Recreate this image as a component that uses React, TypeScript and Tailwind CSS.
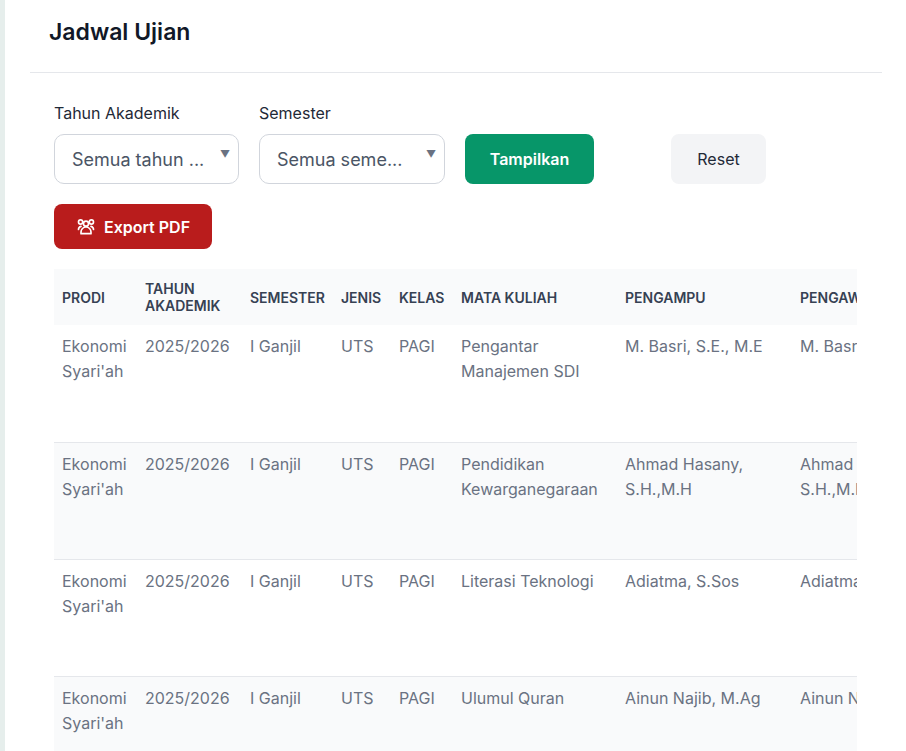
import React from "react";

const rows = [
  ["Pengantar Manajemen SDI", "M. Basri, S.E., M.E", "M. Basri, S.E., M.E"],
  ["Pendidikan Kewarganegaraan", "Ahmad Hasany, S.H.,M.H", "Ahmad Hasany, S.H.,M.H"],
  ["Literasi Teknologi", "Adiatma, S.Sos", "Adiatma, S.Sos"],
  ["Ulumul Quran", "Ainun Najib, M.Ag", "Ainun Najib, M.Ag"],
];
const widths = [83, 105, 91, 58, 62, 164, 175, 200];

export default function App() {
  return (
    <div className="flex min-h-[751px] bg-white text-[#111827]" style={{ fontFamily: "Inter, 'Noto Sans', sans-serif" }}>
      <div className="w-[5px] bg-[#e6eeec] shrink-0" />
      <div className="flex-1 pl-[25px] pr-[24px]">
        <h1 className="h-[73px] pl-[19px] pt-[15px] text-[23px] font-semibold border-b border-gray-200">Jadwal Ujian</h1>
        <div className="pl-[24px] pr-[24px] pt-[28px]">
          <div className="flex items-end">
            <div className="w-[185px] mr-[20px]">
              <div className="text-[16px] mb-[9px] text-[#1f2937]">Tahun Akademik</div>
              <div className="relative h-[50px] rounded-[10px] border border-gray-300 flex items-center pl-[17px] text-[18px] text-gray-600">Semua tahun ...<span className="absolute right-[8px] top-[12px] text-[10px] text-gray-500">▼</span></div>
            </div>
            <div className="w-[186px] mr-[20px]">
              <div className="text-[16px] mb-[9px] text-[#1f2937]">Semester</div>
              <div className="relative h-[50px] rounded-[10px] border border-gray-300 flex items-center pl-[17px] text-[18px] text-gray-600">Semua seme...<span className="absolute right-[8px] top-[12px] text-[10px] text-gray-500">▼</span></div>
            </div>
            <button className="w-[129px] h-[50px] rounded-[8px] bg-[#079669] text-white font-semibold text-[16px] mr-[77px]">Tampilkan</button>
            <button className="w-[95px] h-[50px] rounded-[8px] bg-gray-100 text-[16px] text-[#1f2937]">Reset</button>
          </div>
          <button className="mt-[20px] h-[45px] w-[158px] rounded-[8px] bg-[#b91c1c] text-white font-semibold text-[16px] flex items-center justify-center gap-[8px]">
            <svg width="20" height="20" viewBox="0 0 24 24" fill="none" stroke="currentColor" strokeWidth="2" strokeLinecap="round" strokeLinejoin="round"><circle cx="12" cy="8" r="3"/><circle cx="5.5" cy="6" r="2.5"/><circle cx="18.5" cy="6" r="2.5"/><path d="M6 20v-2a6 6 0 0112 0v2z"/><path d="M3 15a4 4 0 013-3.8M21 15a4 4 0 00-3-3.8"/></svg>
            Export PDF
          </button>
          <div className="mt-[20px] overflow-hidden w-[803px]">
            <table className="border-collapse table-fixed" style={{ width: 938 }}>
              <colgroup>{widths.map((w, i) => <col key={i} style={{ width: w }} />)}</colgroup>
              <thead>
                <tr className="bg-gray-50 h-[56px] text-[14px] font-semibold text-gray-700 text-left">
                  {["PRODI", "TAHUN AKADEMIK", "SEMESTER", "JENIS", "KELAS", "MATA KULIAH", "PENGAMPU", "PENGAWAS"].map(h => (
                    <th key={h} className="px-[8px] font-semibold leading-[17px] whitespace-normal">{h}</th>
                  ))}
                </tr>
              </thead>
              <tbody className="text-[16px] text-gray-500 leading-[25px]">
                {rows.map((r, i) => (
                  <tr key={i} className={`h-[117px] align-top border-b border-gray-200 ${i % 2 ? "bg-gray-50" : ""}`}>
                    <td className="px-[8px] pt-[9px]">Ekonomi Syari'ah</td>
                    <td className="px-[8px] pt-[9px]">2025/2026</td>
                    <td className="px-[8px] pt-[9px]">I Ganjil</td>
                    <td className="px-[8px] pt-[9px]">UTS</td>
                    <td className="px-[8px] pt-[9px]">PAGI</td>
                    <td className="px-[8px] pt-[9px]">{r[0]}</td>
                    <td className="px-[8px] pt-[9px]">{r[1]}</td>
                    <td className="px-[8px] pt-[9px]">{r[2]}</td>
                  </tr>
                ))}
              </tbody>
            </table>
          </div>
        </div>
      </div>
    </div>
  );
}
